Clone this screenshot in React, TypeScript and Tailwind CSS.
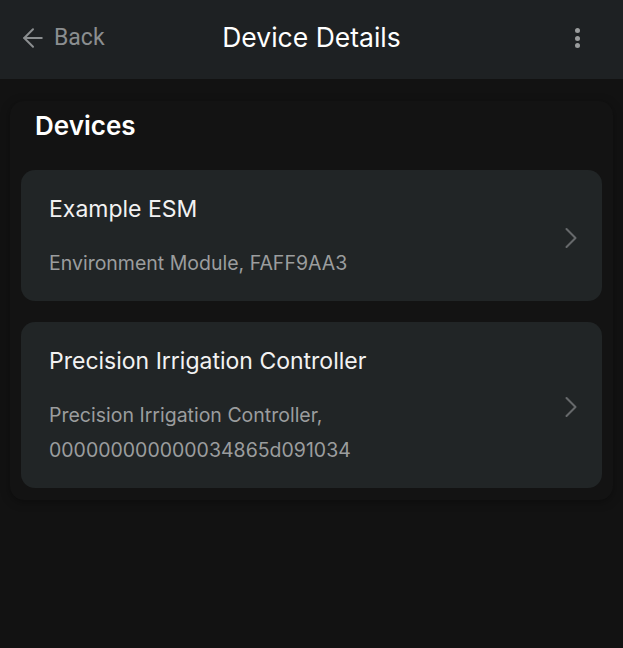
import { ArrowLeft, ChevronRight } from 'lucide-react'

const devices = [
  { name: 'Example ESM', detail: ['Environment Module, FAFF9AA3'] },
  {
    name: 'Precision Irrigation Controller',
    detail: ['Precision Irrigation Controller,', '000000000000034865d091034'],
  },
]

function DeviceCard({ name, detail }: { name: string; detail: string[] }) {
  return (
    <div className="flex items-center rounded-[14px] bg-[#212526] pl-7 pr-[13px] pt-6 pb-5">
      <div className="flex flex-1 flex-col gap-[22px]">
        <div className="text-[23px] leading-[30px] text-[#f2f2f2]">{name}</div>
        <div className="text-[19.5px] leading-[35px] text-[#9b9d9e]">
          {detail.map((d) => (
            <div key={d}>{d}</div>
          ))}
        </div>
      </div>
      <ChevronRight size={36} strokeWidth={1.4} className="text-[#66696b]" />
    </div>
  )
}

export default function App() {
  return (
    <div
      className="h-[648px] w-[623px] overflow-hidden bg-[#121212]"
      style={{ fontFamily: 'Inter, "Noto Sans", sans-serif' }}
    >
      {/* top bar */}
      <div className="relative flex h-[79px] items-center bg-[#1e2123] pl-[18px] pr-5 pb-[3px]">
        <div className="flex items-center gap-[6px] text-[#8b8e90]" style={{ fontFamily: 'Roboto, sans-serif' }}>
          <ArrowLeft size={30} strokeWidth={1.6} />
          <span className="text-[23px]">Back</span>
        </div>
        <div className="pointer-events-none absolute left-0 right-0 text-center text-[26.5px] text-white">
          Device Details
        </div>
        <div className="ml-auto mr-[23px] flex flex-col gap-[2.5px]">
          <span className="h-[5px] w-[5px] rounded-full bg-[#9a9c9d]" />
          <span className="h-[5px] w-[5px] rounded-full bg-[#9a9c9d]" />
          <span className="h-[5px] w-[5px] rounded-full bg-[#9a9c9d]" />
        </div>
      </div>

      {/* devices panel */}
      <div className="mx-[10px] mt-[22px] rounded-[14px] bg-[#131313] px-[11px] pb-3 shadow-[0_2px_10px_rgba(0,0,0,0.35)]">
        <h2 className="px-[14px] pt-[8px] text-[26px] font-semibold leading-[34px] text-white">Devices</h2>
        <div className="mt-[27px] flex flex-col gap-[21px]">
          {devices.map((d) => (
            <DeviceCard key={d.name} name={d.name} detail={d.detail} />
          ))}
        </div>
      </div>
    </div>
  )
}
